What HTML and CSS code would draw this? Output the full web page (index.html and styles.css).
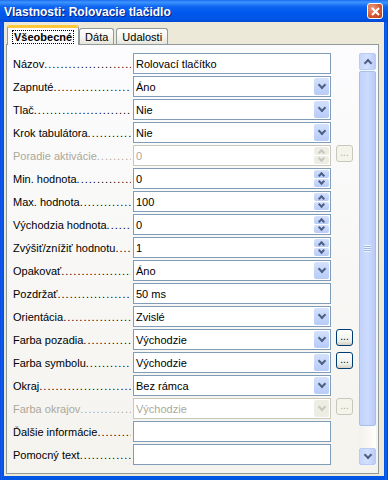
FILE: index.html
```html
<!DOCTYPE html>
<html lang="sk">
<head>
    <meta charset="UTF-8">
    <title>Vlastnosti: Rolovacie tlačidlo</title>
    <link rel="stylesheet" href="styles.css">
</head>
<body>
    <div class="window">
        <div class="titlebar">
            <span class="title">Vlastnosti: Rolovacie tlačidlo</span>
            <span class="close">
                <svg width="9" height="9" viewBox="0 0 9 9"><path d="M1 1 L8 8 M8 1 L1 8" stroke="#fff" stroke-width="2" fill="none"/></svg>
            </span>
        </div>

        <div class="client">
            <div class="tabs">
                <div class="tab active"><span class="focus">Všeobecné</span></div>
                <div class="tab">Dáta</div>
                <div class="tab tab-gap">Udalosti</div>
            </div>

            <div class="panel">
                <div class="form">
                    <div class="row">
                        <span class="label">Názov</span>
                        <div class="field">Rolovací tlačítko</div>
                    </div>
                    <div class="row">
                        <span class="label">Zapnuté</span>
                        <div class="field">Áno<span class="drop"></span></div>
                    </div>
                    <div class="row">
                        <span class="label">Tlač</span>
                        <div class="field">Nie<span class="drop"></span></div>
                    </div>
                    <div class="row">
                        <span class="label">Krok tabulátora</span>
                        <div class="field">Nie<span class="drop"></span></div>
                    </div>
                    <div class="row">
                        <span class="label off">Poradie aktivácie</span>
                        <div class="field off">0<span class="spin"><span class="up"></span><span class="down"></span></span></div>
                        <span class="more off">...</span>
                    </div>
                    <div class="row">
                        <span class="label">Min. hodnota</span>
                        <div class="field">0<span class="spin"><span class="up"></span><span class="down"></span></span></div>
                    </div>
                    <div class="row">
                        <span class="label">Max. hodnota</span>
                        <div class="field">100<span class="spin"><span class="up"></span><span class="down"></span></span></div>
                    </div>
                    <div class="row">
                        <span class="label">Východzia hodnota</span>
                        <div class="field">0<span class="spin"><span class="up"></span><span class="down"></span></span></div>
                    </div>
                    <div class="row">
                        <span class="label">Zvýšiť/znížiť hodnotu</span>
                        <div class="field">1<span class="spin"><span class="up"></span><span class="down"></span></span></div>
                    </div>
                    <div class="row">
                        <span class="label">Opakovať</span>
                        <div class="field">Áno<span class="drop"></span></div>
                    </div>
                    <div class="row">
                        <span class="label">Pozdržať</span>
                        <div class="field">50 ms</div>
                    </div>
                    <div class="row">
                        <span class="label">Orientácia</span>
                        <div class="field">Zvislé<span class="drop"></span></div>
                    </div>
                    <div class="row">
                        <span class="label">Farba pozadia</span>
                        <div class="field">Východzie<span class="drop"></span></div>
                        <span class="more">...</span>
                    </div>
                    <div class="row">
                        <span class="label">Farba symbolu</span>
                        <div class="field">Východzie<span class="drop"></span></div>
                        <span class="more">...</span>
                    </div>
                    <div class="row">
                        <span class="label">Okraj</span>
                        <div class="field">Bez rámca<span class="drop"></span></div>
                    </div>
                    <div class="row">
                        <span class="label off">Farba okrajov</span>
                        <div class="field off">Východzie<span class="drop"></span></div>
                        <span class="more off">...</span>
                    </div>
                    <div class="row">
                        <span class="label">Ďalšie informácie</span>
                        <div class="field"></div>
                    </div>
                    <div class="row">
                        <span class="label">Pomocný text</span>
                        <div class="field"></div>
                    </div>
                </div>

                <div class="scrollbar">
                    <div class="sb-button sb-up"></div>
                    <div class="sb-thumb"><span class="grip"></span></div>
                    <div class="sb-track"></div>
                    <div class="sb-button sb-down"></div>
                </div>
            </div>
        </div>
    </div>
</body>
</html>
```

FILE: styles.css
```css
* {
    box-sizing: border-box;
}

body {
    margin: 0;
    font-family: Tahoma, "Liberation Sans", Arial, sans-serif;
    font-size: 11px;
    color: #000;
}

.window {
    width: 388px;
    height: 480px;
    display: flex;
    flex-direction: column;
    background: linear-gradient(to right, #0831D9, #166AEE 1px, #0055E5 2px, #0055E5 385px, #166AEE 386px, #0831D9);
}

.titlebar {
    height: 22px;
    flex: none;
    display: flex;
    align-items: center;
    justify-content: space-between;
    padding: 0 5px 0 4px;
    background: linear-gradient(#1C6CF0, #3D95FF 10%, #0F66F0 30%, #0058EE 55%, #0055E5 85%, #0049D6);
    color: #fff;
    font-weight: bold;
    font-size: 12px;
}

.title {
    text-shadow: 1px 1px #0A1E80;
    padding-top: 1px;
}

.close {
    width: 16px;
    height: 16px;
    border: 1px solid #fff;
    border-radius: 3px;
    background: radial-gradient(circle at 30% 30%, #EC9E82, #D55733 55%, #C23A14);
    display: flex;
    align-items: center;
    justify-content: center;
}

.client {
    flex: 1;
    margin: 0 4px 4px 4px;
    background: #ECE9D8;
    display: flex;
    flex-direction: column;
}

/* tabs */

.tabs {
    height: 22px;
    flex: none;
    display: flex;
    align-items: flex-end;
    padding-left: 3px;
}

.tab {
    height: 16px;
    padding: 0 5px;
    border: 1px solid #919B9C;
    border-bottom: none;
    border-radius: 3px 3px 0 0;
    background: linear-gradient(#FFFFFF, #F3F3EF 60%, #E6E5DD);
    display: flex;
    align-items: center;
}

.tab-gap {
    margin-left: 2px;
}

.tab.active {
    position: relative;
    z-index: 1;
    height: 20px;
    margin-bottom: -1px;
    padding: 0 4px;
    border-top: 3px solid #FFC83C;
    background: #FCFCFE;
    font-weight: bold;
}

.focus {
    border: 1px dotted #000;
    padding: 0 1px;
    line-height: 12px;
}

/* panel */

.panel {
    flex: 1;
    display: flex;
    margin: 0 5px 2px 2px;
    padding: 8px 2px 8px 6px;
    border: 1px solid #919B9C;
    background: linear-gradient(#FCFCFE, #F4F3EE);
}

.form {
    flex: 1;
    display: flex;
    flex-direction: column;
    gap: 2px;
}

.row {
    height: 21px;
    display: flex;
}

.label {
    width: 118px;
    margin-right: 2px;
    white-space: nowrap;
    overflow: hidden;
    display: flex;
    align-items: center;
}

.label::after {
    content: "..................................................";
    letter-spacing: 1px;
}

.label.off {
    color: #ACA899;
}

.field {
    width: 198px;
    height: 21px;
    border: 1px solid #7F9DB9;
    background: #fff;
    padding-left: 2px;
    display: flex;
    align-items: center;
    white-space: nowrap;
}

.field.off {
    border-color: #C9C7BA;
    color: #ACA899;
}

.drop {
    width: 15px;
    height: 17px;
    margin: 0 1px 0 auto;
    border-radius: 2px;
    background: linear-gradient(#D4E1FD, #B7CBF8);
    display: flex;
    align-items: center;
    justify-content: center;
}

.drop::after {
    content: "";
    width: 4px;
    height: 4px;
    margin-top: -3px;
    border-right: 2px solid #4D6185;
    border-bottom: 2px solid #4D6185;
    transform: rotate(45deg);
}

.off .drop {
    background: #EEEDE5;
}

.off .drop::after {
    border-color: #C9C7BA;
}

.spin {
    width: 15px;
    height: 17px;
    margin: 0 1px 0 auto;
    display: flex;
    flex-direction: column;
    gap: 1px;
}

.spin span {
    flex: 1;
    border-radius: 2px;
    background: linear-gradient(#D4E1FD, #B7CBF8);
    display: flex;
    align-items: center;
    justify-content: center;
}

.spin span::after {
    content: "";
    width: 3px;
    height: 3px;
    border-right: 2px solid #4D6185;
    border-bottom: 2px solid #4D6185;
}

.spin .up::after {
    transform: rotate(-135deg);
    margin-top: 3px;
}

.spin .down::after {
    transform: rotate(45deg);
    margin-top: -3px;
}

.off .spin span {
    background: #EEEDE5;
}

.off .spin span::after {
    border-color: #C9C7BA;
}

.more {
    width: 17px;
    height: 17px;
    margin-left: 5px;
    border: 1px solid #003C74;
    border-radius: 3px;
    background: linear-gradient(#FFFFFF, #F0F0EA 70%, #D6D0C5);
    font-size: 10px;
    line-height: 14px;
    text-align: center;
}

.more.off {
    border-color: #C9C7BA;
    background: #F5F4EA;
    color: #ACA899;
}

/* scrollbar */

.scrollbar {
    width: 17px;
    display: flex;
    flex-direction: column;
    background: linear-gradient(to right, #F3F1EC, #FEFEFB);
}

.sb-button {
    height: 17px;
    flex: none;
    border: 1px solid #B7CDF7;
    border-radius: 2px;
    background: linear-gradient(to right, #C6D6FD, #D4E0FD 50%, #B9CCF8);
    display: flex;
    align-items: center;
    justify-content: center;
}

.sb-button::after {
    content: "";
    width: 4px;
    height: 4px;
    border-right: 2px solid #4D6185;
    border-bottom: 2px solid #4D6185;
}

.sb-up::after {
    transform: rotate(-135deg);
    margin-top: 3px;
}

.sb-down::after {
    transform: rotate(45deg);
    margin-top: -3px;
}

.sb-thumb {
    height: 355px;
    flex: none;
    margin-top: 1px;
    border: 1px solid #A6BEF0;
    border-radius: 2px;
    background: linear-gradient(to right, #C1D2FC, #CCDBFD 50%, #B8CBF8);
    display: flex;
    align-items: center;
    justify-content: center;
}

.grip {
    width: 7px;
    height: 7px;
    background: repeating-linear-gradient(#EEF4FE 0, #EEF4FE 1px, #9DB6EE 1px, #9DB6EE 2px);
}

.sb-track {
    flex: 1;
}
```
